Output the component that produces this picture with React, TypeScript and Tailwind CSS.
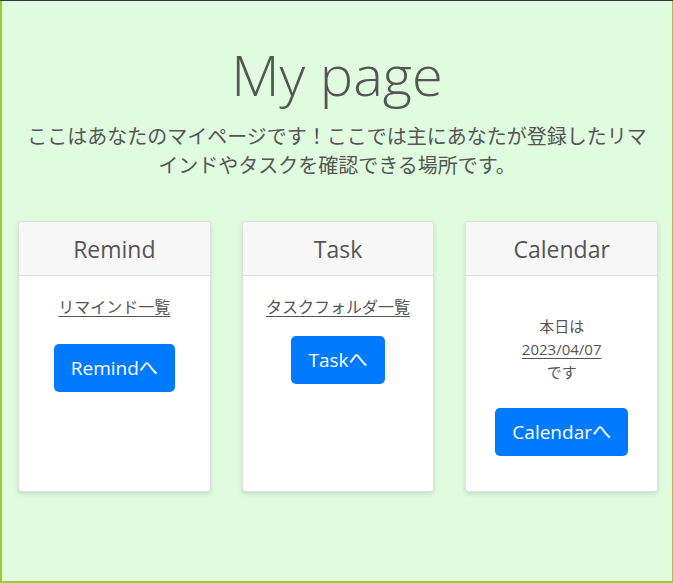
import React from "react";

const sans = "font-['Open_Sans','Noto_Sans_CJK_JP',sans-serif]";

function Card({ title, children }: { title: string; children: React.ReactNode }) {
  return (
    <div className="flex flex-col bg-white border border-black/[.12] rounded-[4px] shadow-[0_2px_4px_rgba(0,0,0,0.12)] overflow-hidden">
      <div className="h-[54px] pt-[2px] flex items-center justify-center bg-[#f7f7f7] border-b border-[#dcdcdc] text-[23px] text-[#555]">
        {title}
      </div>
      <div className="flex-1 flex flex-col items-center">{children}</div>
    </div>
  );
}

function Btn({ children, className = "" }: { children: React.ReactNode; className?: string }) {
  return (
    <button className={`h-[48px] px-[17px] rounded-[5px] bg-[#007bff] text-white text-[19px] leading-none ${className}`}>
      {children}
    </button>
  );
}

export default function App() {
  return (
    <div className={`h-[583px] flex flex-col ${sans}`}>
      <div className="h-px bg-[#343a40]" />
      <div className="flex-1 bg-[#dffcdf] border-l-2 border-r border-b-2 border-[#9acd32] flex flex-col">
        <h1 className="pt-[40px] h-[106px] text-center text-[56px] leading-[1.2] font-light text-[#555]">My page</h1>
        <p className="mt-[15px] mx-auto w-[632px] text-center text-[20px] leading-[29px] text-[#555]">
          ここはあなたのマイページです！ここでは主にあなたが登録したリマインドやタスクを確認できる場所です。
        </p>
        <div className="mt-[41px] grid grid-cols-3 gap-[31px] pl-4 pr-[14px] h-[271px]">
          <Card title="Remind">
            <a className="mt-[19px] text-[16px] leading-[24px] text-[#555] underline underline-offset-[3px]">リマインド一覧</a>
            <Btn className="mt-[25px]">Remindへ</Btn>
          </Card>
          <Card title="Task">
            <a className="mt-[19px] text-[16px] leading-[24px] text-[#555] underline underline-offset-[3px]">タスクフォルダ一覧</a>
            <Btn className="mt-[17px]">Taskへ</Btn>
          </Card>
          <Card title="Calendar">
            <div className="mt-[39px] text-center text-[15px] leading-[23px] text-[#555]">
              <div>本日は</div>
              <div className="underline underline-offset-[3px]">2023/04/07</div>
              <div>です</div>
            </div>
            <Btn className="mt-[24px]">Calendarへ</Btn>
          </Card>
        </div>
      </div>
    </div>
  );
}
